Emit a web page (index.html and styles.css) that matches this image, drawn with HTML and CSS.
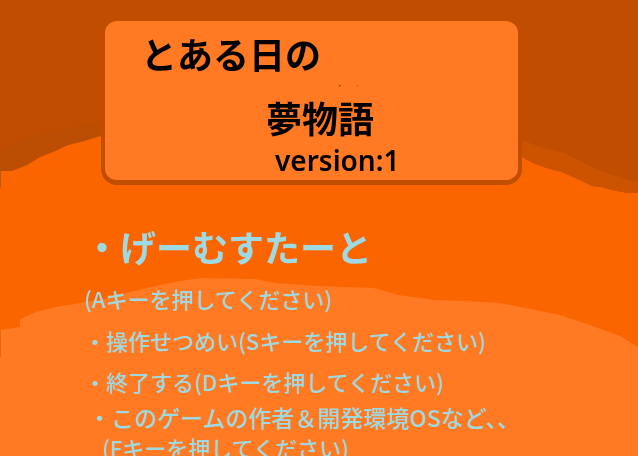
FILE: index.html
```html
<!DOCTYPE html>
<html lang="ja">
<head>
<meta charset="utf-8">
<meta name="viewport" content="width=device-width, initial-scale=1">
<title>とある日の夢物語</title>
<link rel="stylesheet" href="styles.css">
</head>
<body>
<svg class="scene" viewBox="0 0 638 456" preserveAspectRatio="none" aria-hidden="true">
  <path fill="#fb6500" d="M0 171 L12 171 L27 165 L40 157 L53 152 L68 145 L84 141 L104 135 L200 118 L500 125 L522 157 L535 164 L550 169 L562 172 L582 181 L592 186 L602 187 L612 190 L628 193 L638 193 V456 H0Z"/>
  <path fill="#b85005" opacity=".55" d="M0 151 L25 138 L70 127 L101 123 L101 136 L84 141 L68 145 L53 152 L40 157 L27 165 L12 171 L0 171Z"/>
  <path fill="#cc5300" d="M522 140 L545 149 L565 153 L590 166 L620 178 L638 182 V193 L628 193 L612 190 L602 187 L592 186 L582 181 L562 172 L550 169 L535 164 L522 157Z"/>
  <path fill="#ff7a22" d="M0 330 L20 327 V319 L36 312 L56 307 L80 303 L103 299 L130 292 L160 285 L180 281 L202 278 L255 279 L275 283 L318 286 L375 288 L398 295 L435 300 L465 301 L500 303 L535 310 L560 315 L590 325 L620 336 L638 347 V456 H0Z"/>
  <path fill="#b95b1b" d="M0 171 H1 V188 H0Z"/>
  <path fill="#e8660f" d="M0 330 H1 V357 H0Z"/>
</svg>
<main class="screen">
  <header class="title-card">
    <h1 class="title">
      <span class="title-lead">とある日の</span>
      <span class="title-main">夢物語</span>
    </h1>
    <p class="version">version:1</p>
    <svg class="specks" viewBox="0 0 20 2" aria-hidden="true"><path fill="#b84a08" d="M0 0h2v1h-1v1h-1z M18 0h1v1h-1z"/></svg>
  </header>
  <nav class="menu">
    <button class="item item-start" type="button">・げーむすたーと</button>
    <button class="item item-hint" type="button">(Aキーを押してください)</button>
    <button class="item" type="button">・操作せつめい(Sキーを押してください)</button>
    <button class="item" type="button">・終了する(Dキーを押してください)</button>
    <button class="item item-about" type="button">・このゲームの作者＆開発環境OSなど、、<span class="about-key">(Fキーを押してください)</span></button>
  </nav>
</main>
</body>
</html>
```

FILE: styles.css
```css
* {
  box-sizing: border-box;
}

body {
  margin: 0;
  background: #c04d00;
  font-family: "Noto Sans CJK JP", sans-serif;
}

.scene {
  position: fixed;
  inset: 0;
  z-index: -1;
  width: 100%;
  height: 100%;
}

.screen {
  height: 100vh;
  overflow: hidden;
  padding: 17px 116px 0 101px;
}

.title-card {
  position: relative;
  padding: 14px 0 6px 36px;
  border: 4px solid #c04d00;
  border-bottom-width: 5px;
  border-radius: 16px;
  background: #ff7a22;
  color: #000;
}

.title {
  display: flex;
  flex-direction: column;
  gap: 28px;
  margin: 0;
  font-size: 36px;
  font-weight: 700;
  line-height: 36px;
}

.title-main {
  padding-left: 125px;
}

.version {
  margin: 11px 0 0;
  padding-left: 134px;
  font-family: "Noto Sans", sans-serif;
  font-size: 28px;
  font-weight: 600;
  line-height: 28px;
}

.specks {
  position: absolute;
  top: 64px;
  left: 234px;
  width: 20px;
  height: 2px;
}

.menu {
  display: flex;
  flex-direction: column;
  align-items: flex-start;
  margin-top: 31px;
  margin-left: -17px;
}

.item {
  margin: 0;
  padding: 0;
  border: 0;
  background: none;
  color: #9fd9e2;
  font-family: inherit;
  font-size: 22px;
  font-weight: 500;
  line-height: 41px;
  text-align: left;
  white-space: nowrap;
  cursor: pointer;
}

.item-start {
  font-size: 36px;
  font-weight: 700;
  line-height: 60px;
}

.item-hint {
  line-height: 44px;
}

.item-about {
  display: flex;
  flex-direction: column;
  padding-left: 4px;
  font-size: 23px;
  line-height: 30px;
}

.about-key {
  padding-left: 14px;
  font-size: 22px;
}
```
